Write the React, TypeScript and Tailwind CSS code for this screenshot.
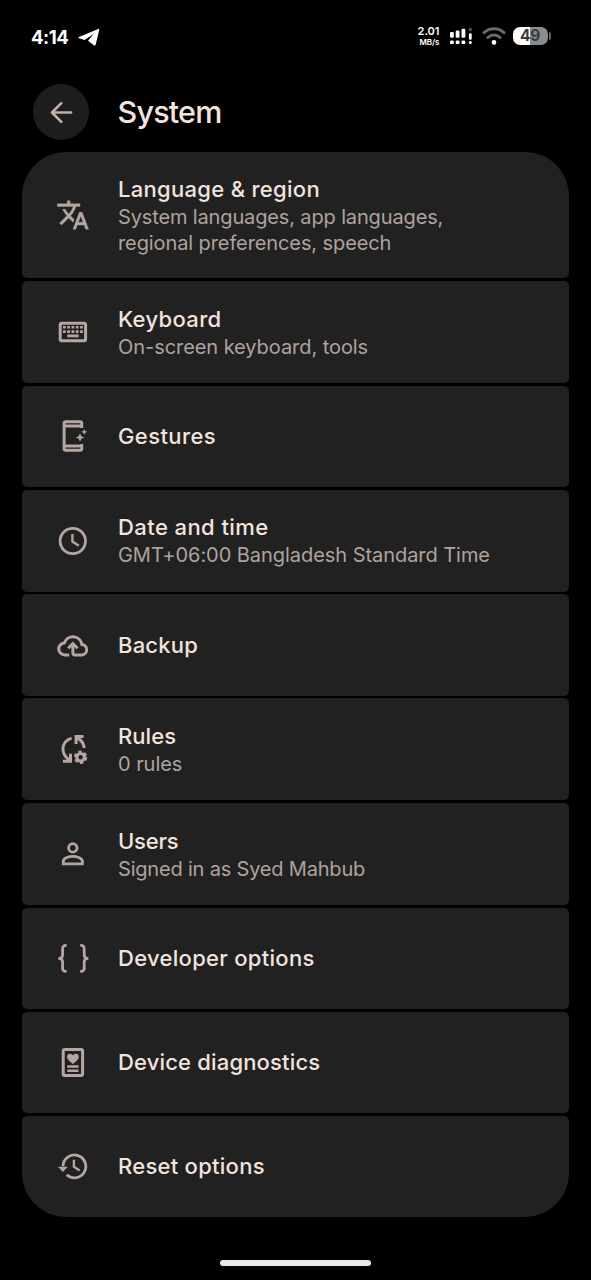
import type { ReactNode } from "react";

function Glyph({ children }: { children: ReactNode }) {
  return (
    <svg
      viewBox="0 0 40 40"
      className="size-10 shrink-0 text-[#b5a6a1]"
      fill="none"
      stroke="currentColor"
      strokeWidth="3"
      aria-hidden="true"
    >
      {children}
    </svg>
  );
}

const TranslateIcon = () => (
  <Glyph>
    <g transform="translate(2.9 3) scale(1.42)" fill="currentColor" strokeWidth="0.25">
      <path d="M12.87 15.07l-2.54-2.51.03-.03c1.74-1.94 2.98-4.17 3.71-6.53H17V4h-7V2H8v2H1v1.99h11.17C11.5 7.92 10.44 9.75 9 11.35 8.07 10.32 7.3 9.19 6.69 8h-2c.73 1.63 1.73 3.17 2.98 4.56l-5.09 5.02L4 19l5-5 3.11 3.11.76-2.04zM18.5 10h-2L12 22h2l1.12-3h4.75L21 22h2l-4.500-12zm-2.620 7l1.620-4.330L19.120 17h-3.240z" />
    </g>
  </Glyph>
);

const KeyboardIcon = () => (
  <Glyph>
    <rect x="7.200" y="11.300" width="25.400" height="17.400" rx="1.500" />
    <g fill="currentColor" stroke="none">
      <path d="M10 14h2.800v2.600H10zM14.200 14H17v2.600h-2.800zM18.500 14h2.800v2.600h-2.800zM22.800 14h2.800v2.600h-2.800zM27.100 14h2.800v2.600h-2.800z" />
      <path d="M10 18.300h2.800v2.600H10zM14.200 18.300H17v2.600h-2.800zM18.500 18.300h2.800v2.600h-2.800zM22.800 18.300h2.800v2.600h-2.800zM27.100 18.300h2.800v2.600h-2.800z" />
      <path d="M14.200 22.500h11.400v2.800H14.200z" />
    </g>
  </Glyph>
);

const GesturesIcon = () => (
  <Glyph>
    <path d="M28.700 12V7a1.300 1.300 0 0 0-1.300-1.300H12.400A1.300 1.300 0 0 0 11.100 7v26a1.300 1.300 0 0 0 1.300 1.300h15A1.300 1.300 0 0 0 28.700 33v-5M11 10h18M11 30h18" />
    <g fill="currentColor" stroke="none">
      <path d="M27 17.200l1.300 3 3 1.300-3 1.300-1.300 3-1.300-3-3-1.300 3-1.300z" />
      <path d="M31.300 12.900l.9 2 2 .9-2 .9-.9 2-.9-2-2-.9 2-.9z" />
    </g>
  </Glyph>
);

const ClockIcon = () => (
  <Glyph>
    <circle cx="19.800" cy="20" r="12.700" strokeWidth="2.800" />
    <path d="M19.400 13v7.600l6.400 4.200" strokeWidth="2.400" />
  </Glyph>
);

const BackupIcon = () => (
  <Glyph>
    <path d="M16.200 29.900h-4a6 6 0 0 1-.9-12A9.100 9.100 0 0 1 28.900 19.600h.3a5.200 5.200 0 0 1 .1 10.300h-7.500a1.900 1.900 0 0 1-1.900-1.900v-8.700" />
    <path d="M15.200 23.300l4.700-4.600 4.700 4.600" />
  </Glyph>
);

const RulesIcon = () => (
  <Glyph>
    <path d="M18.600 9.100C13.400 10.700 9.900 14.900 9.900 20.100c0 5 2.900 8.400 6.700 11.200M9.900 32.300h7.600v-7.600" />
    <path d="M30.500 7.500h-7.400v7.600M24 8.800c4.300 1.800 6.600 5.400 7.300 10.200" />
    <circle cx="27.600" cy="28.300" r="3.800" strokeWidth="3.200" />
    <circle cx="27.600" cy="28.300" r="5.500" strokeWidth="2.400" strokeDasharray="3.300 2.460" />
  </Glyph>
);

const UserIcon = () => (
  <Glyph>
    <circle cx="19.800" cy="13.900" r="4.200" strokeWidth="2.800" />
    <path d="M10.300 29.900v-2.500c0-3.700 6.300-5 9.500-5s9.600 1.300 9.600 5v2.500z" strokeWidth="2.800" />
  </Glyph>
);

const BracesIcon = () => (
  <Glyph>
    <path d="M13.600 7.400h-1a3 3 0 0 0-3 3v6.300c0 2.300-1.300 3.700-4.200 3.700 2.900 0 4.200 1.400 4.200 3.700v6.300a3 3 0 0 0 3 3h1" strokeWidth="2.800" />
    <path d="M27.200 7.400h1a3 3 0 0 1 3 3v6.300c0 2.300 1.300 3.700 4.200 3.700-2.900 0-4.200 1.400-4.200 3.700v6.300a3 3 0 0 1-3 3h-1" strokeWidth="2.800" />
  </Glyph>
);

const DiagnosticsIcon = () => (
  <Glyph>
    <rect x="10.200" y="7.400" width="19.400" height="26" rx="1.500" />
    <path d="M14.300 24.600h11.200M14.300 28.800h11.200" strokeWidth="2.500" />
    <path
      fill="currentColor"
      stroke="none"
      d="M19.900 22c-3.700-2.900-5.900-4.700-5.900-7.200 0-3.300 4-4.200 5.900-1.500 1.900-2.700 5.900-1.800 5.900 1.500 0 2.500-2.200 4.300-5.900 7.200z"
    />
  </Glyph>
);

const ResetIcon = () => (
  <Glyph>
    <path d="M10 20.300A11.400 11.400 0 1 1 13.700 28.800" strokeWidth="2.800" />
    <path d="M20.900 13.700v7l5.700 3.700" strokeWidth="2.400" />
    <path d="M5 20.700h9.800l-4.900 5.200z" fill="currentColor" stroke="none" />
  </Glyph>
);

type Line = { text: string; tracking: string };
type Item = { icon: ReactNode; title: Line; lines?: Line[]; height: string };

const items: Item[] = [
  {
    icon: <TranslateIcon />,
    title: { text: "Language & region", tracking: "tracking-[0.3px]" },
    lines: [
      { text: "System languages, app languages,", tracking: "tracking-[-0.14px]" },
      { text: "regional preferences, speech", tracking: "tracking-[-0.1px]" },
    ],
    height: "h-[126.3px]",
  },
  {
    icon: <KeyboardIcon />,
    title: { text: "Keyboard", tracking: "tracking-[0.34px]" },
    lines: [{ text: "On-screen keyboard, tools", tracking: "tracking-[-0.06px]" }],
    height: "h-[102.1px]",
  },
  {
    icon: <GesturesIcon />,
    title: { text: "Gestures", tracking: "tracking-[0.4px]" },
    height: "h-[101.2px]",
  },
  {
    icon: <ClockIcon />,
    title: { text: "Date and time", tracking: "tracking-[0.42px]" },
    lines: [{ text: "GMT+06:00 Bangladesh Standard Time", tracking: "tracking-[-0.05px]" }],
    height: "h-[102.1px]",
  },
  {
    icon: <BackupIcon />,
    title: { text: "Backup", tracking: "tracking-[0.2px]" },
    height: "h-[101.2px]",
  },
  {
    icon: <RulesIcon />,
    title: { text: "Rules", tracking: "tracking-[0.05px]" },
    lines: [{ text: "0 rules", tracking: "tracking-[-0.05px]" }],
    height: "h-[102.1px]",
  },
  {
    icon: <UserIcon />,
    title: { text: "Users", tracking: "tracking-[-0.2px]" },
    lines: [{ text: "Signed in as Syed Mahbub", tracking: "tracking-[-0.19px]" }],
    height: "h-[102.1px]",
  },
  {
    icon: <BracesIcon />,
    title: { text: "Developer options", tracking: "tracking-[0.3px]" },
    height: "h-[101.2px]",
  },
  {
    icon: <DiagnosticsIcon />,
    title: { text: "Device diagnostics", tracking: "tracking-[0.17px]" },
    height: "h-[101.2px]",
  },
  {
    icon: <ResetIcon />,
    title: { text: "Reset options", tracking: "tracking-[0.27px]" },
    height: "h-[101.2px]",
  },
];

function Row({ icon, title, lines, height }: Item) {
  return (
    <li
      className={`flex items-center gap-[25px] rounded-[5px] bg-[#212121] pl-[31px] first:rounded-t-[44px] last:rounded-b-[44px] ${height}`}
    >
      {icon}
      <div className="whitespace-nowrap">
        <h2 className={`text-[22px] leading-[30px] font-[550] text-[#f3e3de] ${title.tracking}`}>
          {title.text}
        </h2>
        {lines && (
          <div className="pt-px">
            {lines.map((line) => (
              <p key={line.text} className={`text-[20px] leading-[25.500px] text-[#b0a29e] ${line.tracking}`}>
                {line.text}
              </p>
            ))}
          </div>
        )}
      </div>
    </li>
  );
}

function StatusBar() {
  return (
    <div className="flex h-[72px] items-center justify-between pr-[40px] pl-[31px] text-white">
      <div className="flex items-center gap-[9.500px]">
        <span className="mt-px text-[18.500px] leading-6 font-bold tracking-[-0.5px]">4:14</span>
        <svg viewBox="0 0 22 18" className="mt-[2px] h-[18px] w-[22px]" fill="currentColor" aria-hidden="true">
          <path d="M20.200.9 1 9.100c-.8.400-.8.900 0 1.200l5.600 1.700L15.600 6 10 12.800l5.900 4.500c.9.500 1.600.2 1.800-.8L21.200 1.900c.2-.9-.3-1.300-1-1z" />
        </svg>
      </div>
      <div className="flex items-center">
        <div className="flex w-[22px] flex-col items-end font-semibold">
          <span className="text-[11px] leading-[11px]">2.01</span>
          <span className="text-[8px] leading-[10px]">MB/s</span>
        </div>
        <svg viewBox="0 0 24 18" className="ml-[9px] h-[18px] w-[24px]" fill="currentColor" aria-hidden="true">
          <rect x="1" y="5" width="3.800" height="5.800" rx="1.200" />
          <rect x="6.700" y="3.500" width="3.800" height="7.300" rx="1.200" />
          <rect x="12.500" y="1.800" width="3.800" height="9" rx="1.200" />
          <rect x="19.700" y="0.800" width="3.200" height="3.500" rx="1" fill="#4a4a4a" />
          <rect x="19.900" y="6.300" width="2.800" height="6.500" rx="1.200" />
          <rect x="1" y="13.500" width="3.800" height="3.600" rx="1.200" />
          <rect x="6.700" y="13.500" width="3.800" height="3.600" rx="1.200" />
          <rect x="12.500" y="13.500" width="3.800" height="3.600" rx="1.200" />
          <circle cx="21.300" cy="15.500" r="1.500" />
        </svg>
        <svg viewBox="0 0 24 18" className="ml-[9px] h-[18px] w-[24px]" fill="none" strokeLinecap="round" aria-hidden="true">
          <path d="M2 5.600a14.800 14.800 0 0 1 20 0" stroke="#6a6a6a" strokeWidth="3" />
          <path d="M5.900 10.500a9 9 0 0 1 12.200 0" stroke="#6a6a6a" strokeWidth="3" />
          <circle cx="12" cy="15.400" r="2.300" fill="#fff" />
        </svg>
        <div className="ml-[7px] flex h-[18px] w-[35px] items-center justify-center rounded-[7px] bg-linear-to-r from-white from-50% to-[#8c8c8c] to-50% text-[15.500px] font-bold tracking-[-0.3px] text-[#3b3b3b]">
          49
        </div>
        <div className="ml-[1.500px] h-[8px] w-[2px] rounded-r-[2px] bg-[#666]" />
      </div>
    </div>
  );
}

export default function App() {
  return (
    <main className="flex h-[1280px] w-[591px] flex-col bg-black font-['Inter',sans-serif]">
      <StatusBar />
      <header className="flex h-[80px] items-start gap-[28.500px] pt-[12px] pl-[33px]">
        <button className="flex size-[56px] items-center justify-center rounded-full bg-[#1d1d1d]" aria-label="Back">
          <svg viewBox="0 0 24 24" className="size-[23px] text-[#c3aea8]" fill="none" stroke="currentColor" strokeWidth="2.700" strokeLinecap="round" strokeLinejoin="round">
            <path d="M22 12H2.500M11.800 2.200 2 12l9.800 9.800" />
          </svg>
        </button>
        <h1 className="text-[30.500px] leading-[56px] font-[450] tracking-[-0.800px] text-[#f3e3de]">System</h1>
      </header>
      <ul className="mr-[22px] ml-[22px] flex flex-col gap-[2.700px]">
        {items.map((item) => (
          <Row key={item.title.text} {...item} />
        ))}
      </ul>
      <footer className="flex flex-1 items-end justify-center pb-[14px]">
        <div className="h-[6px] w-[151px] rounded-full bg-[#e8e8e8]" />
      </footer>
    </main>
  );
}
